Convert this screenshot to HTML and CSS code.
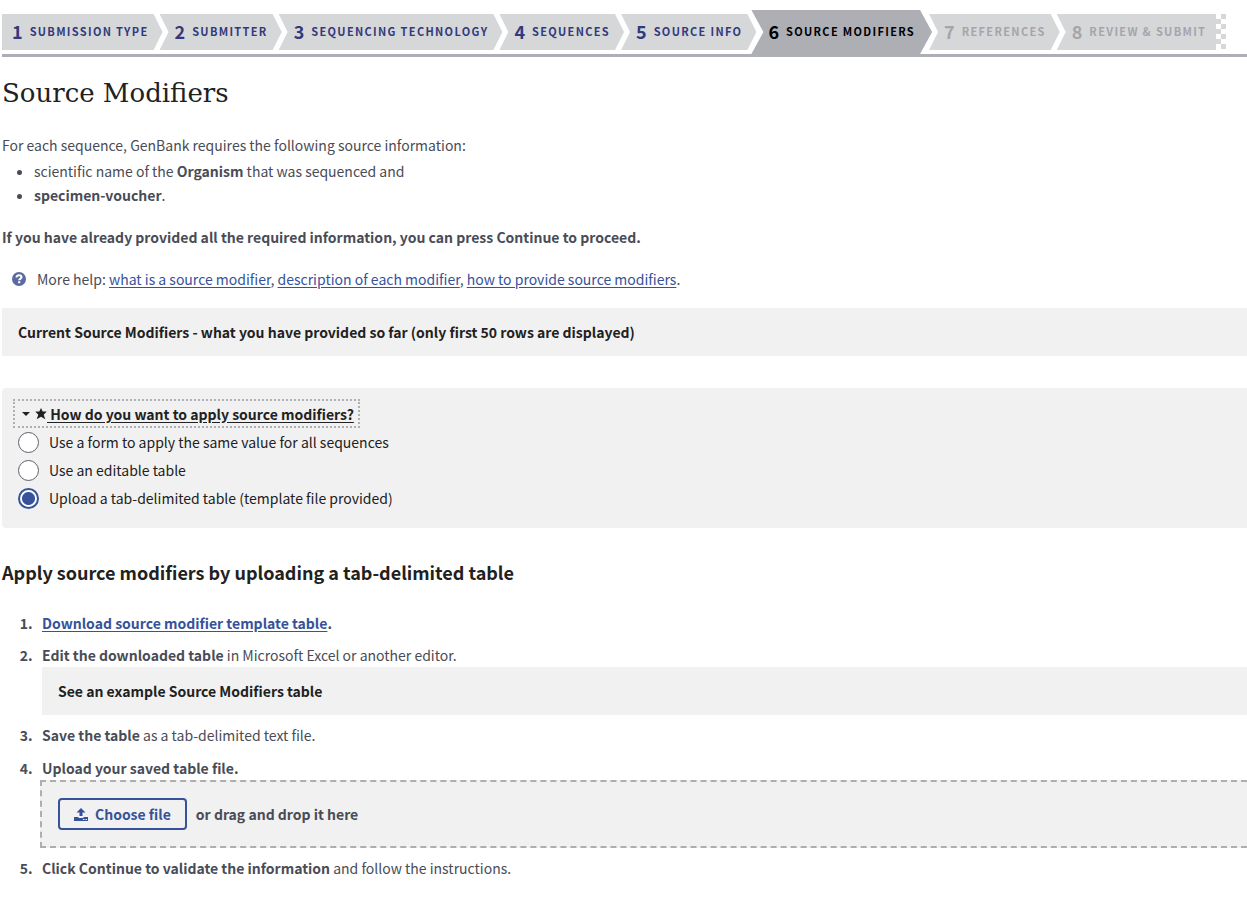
FILE: index.html
```html
<!DOCTYPE html>
<html lang="en">
<head>
<meta charset="utf-8">
<title>Source Modifiers</title>
<link rel="stylesheet" href="styles.css">
</head>
<body>
<nav class="wizard" aria-label="Submission steps">
  <ol class="steps">
    <li class="step first"><a href="#"><span class="num">1</span><span class="name">SUBMISSION TYPE</span></a></li>
    <li class="step"><a href="#"><span class="num">2</span><span class="name">SUBMITTER</span></a></li>
    <li class="step"><a href="#"><span class="num">3</span><span class="name">SEQUENCING TECHNOLOGY</span></a></li>
    <li class="step"><a href="#"><span class="num">4</span><span class="name">SEQUENCES</span></a></li>
    <li class="step"><a href="#"><span class="num">5</span><span class="name">SOURCE INFO</span></a></li>
    <li class="step current" aria-current="step"><span class="num">6</span><span class="name">SOURCE MODIFIERS</span></li>
    <li class="step pending"><span class="num">7</span><span class="name">REFERENCES</span></li>
    <li class="step pending last"><span class="num">8</span><span class="name">REVIEW &amp; SUBMIT</span></li>
  </ol>
  <svg class="finish" width="10" height="36" viewBox="0 0 10 36" aria-hidden="true">
    <path fill="#d6d7d9" d="M5 0h5v5H5zM0 5h5v5H0zM5 10h5v5H5zM0 15h5v5H0zM5 20h5v5H5zM0 25h5v5H0zM5 30h5v5H5z"/>
  </svg>
</nav>

<main>
  <h1>Source Modifiers</h1>
  <p class="intro">For each sequence, GenBank requires the following source information:</p>
  <ul class="required">
    <li>scientific name of the <strong>Organism</strong> that was sequenced and</li>
    <li><strong>specimen-voucher</strong>.</li>
  </ul>
  <p class="note"><strong>If you have already provided all the required information, you can press Continue to proceed.</strong></p>
  <p class="help">
    <svg class="help-icon" width="14" height="14" viewBox="0 0 14 14" aria-hidden="true">
      <circle cx="7" cy="7" r="7" fill="#5b6a9f"/>
      <path d="M4.5 5.500C4.500 3.900 5.700 3.300 7 3.300s2.500.7 2.500 2c0 1.500-2.300 1.500-2.300 2.900" fill="none" stroke="#fff" stroke-width="2"/>
      <path d="M6.100 9.200h2.200v2h-2.200z" fill="#fff"/>
    </svg>
    <span>More help: <a href="#">what is a source modifier</a>, <a href="#">description of each modifier</a>, <a href="#">how to provide source modifiers</a>.</span>
  </p>

  <button type="button" class="disclosure">Current Source Modifiers - what you have provided so far (only first 50 rows are displayed)</button>

  <div class="panel">
    <fieldset class="choices">
      <legend>
        <button type="button" class="toggle" aria-expanded="true">
          <svg width="8" height="4" viewBox="0 0 8 4" aria-hidden="true"><path d="M0 0h8L4 4z" fill="#212121"/></svg>
          <svg class="star" width="12" height="12" viewBox="0 0 12 12" aria-hidden="true"><path d="M6 0l1.700 3.600h4L8.700 6.700l1.600 4.600L6 8.800l-4.300 2.500 1.600-4.600L.3 3.600h4z" fill="#212121"/></svg>
          <span class="question">&nbsp;How do you want to apply source modifiers?</span>
        </button>
      </legend>
      <label class="choice"><input type="radio" name="method">Use a form to apply the same value for all sequences</label>
      <label class="choice"><input type="radio" name="method">Use an editable table</label>
      <label class="choice"><input type="radio" name="method" checked>Upload a tab-delimited table (template file provided)</label>
    </fieldset>
  </div>

  <h2>Apply source modifiers by uploading a tab-delimited table</h2>
  <ol class="tasks">
    <li><strong><a href="#">Download source modifier template table</a>.</strong></li>
    <li><strong>Edit the downloaded table</strong> in Microsoft Excel or another editor.
      <button type="button" class="disclosure">See an example Source Modifiers table</button>
    </li>
    <li><strong>Save the table</strong> as a tab-delimited text file.</li>
    <li class="upload"><strong>Upload your saved table file.</strong>
      <div class="dropzone">
        <button type="button" class="choose">
          <svg width="14" height="13" viewBox="0 0 14 13" aria-hidden="true"><path fill="#36529b" d="M7 0l4.500 4.500H8.500V8h-3V4.500H2.500zM0 9h4.500v1h5V9H14v4H0z"/><path fill="#f1f1f1" d="M9 11h1.500v1H9zM11.500 11H13v1h-1.500z"/></svg>
          Choose file
        </button>
        <strong>or drag and drop it here</strong>
      </div>
    </li>
    <li><strong>Click Continue to validate the information</strong> and follow the instructions.</li>
  </ol>
</main>
</body>
</html>
```
FILE: styles.css
```css
* {
  box-sizing: border-box;
}

@counter-style spaced-decimal {
  system: extends decimal;
  suffix: ".\00a0\00a0\00a0";
}

body {
  margin: 0;
  padding: 10px 0 0 2px;
  background: #fff;
  color: #494c56;
  font-family: "Noto Sans CJK SC", "Noto Sans", sans-serif;
  font-size: 14px;
  line-height: 24px;
}

button {
  font: inherit;
  cursor: pointer;
}

a {
  color: #36529b;
  text-underline-offset: 2px;
}

/* Step bar */
.wizard {
  display: flex;
  align-items: center;
  border-bottom: 3px solid #aeafb5;
}

.steps {
  display: flex;
  align-items: center;
  height: 44px;
  margin: 0;
  padding: 0;
  list-style: none;
}

.step {
  display: flex;
  align-items: center;
  height: 36px;
  margin-left: -3px;
  padding: 0 14px 2px 15px;
  background: #d6d7d9;
  color: #323a7c;
  font-weight: bold;
  white-space: nowrap;
  clip-path: polygon(0 0, calc(100% - 9px) 0, 100% 50%, calc(100% - 9px) 100%, 0 100%, 9px 50%);
}

.step,
.step a {
  gap: 7px;
}

.step a {
  display: flex;
  align-items: center;
  color: inherit;
  text-decoration: none;
}

.num {
  font-size: 18px;
}

.name {
  font-size: 11px;
  letter-spacing: 0.12em;
}

.step.first {
  margin-left: 0;
  padding-left: 10px;
  clip-path: polygon(0 0, calc(100% - 9px) 0, 100% 50%, calc(100% - 9px) 100%, 0 100%);
}

.step.current {
  height: 44px;
  margin-left: -5px;
  padding: 0 17px 2px;
  background: #aeafb5;
  color: #000;
  clip-path: polygon(0 0, calc(100% - 12px) 0, 100% 50%, calc(100% - 12px) 100%, 0 100%, 12px 50%);
}

.step.pending {
  color: #a4a5ab;
}

.step.last {
  padding-right: 10px;
  clip-path: polygon(0 0, 100% 0, 100% 100%, 0 100%, 9px 50%);
}

/* Introduction */
h1 {
  margin: 16px 0 20px;
  color: #212121;
  font-family: "DejaVu Serif", serif;
  font-size: 26px;
  font-weight: normal;
  line-height: 40px;
}

p {
  margin: 0;
}

.required {
  margin: 2px 0 18px;
  padding-left: 32px;
}

.note {
  margin-bottom: 18px;
}

.help {
  display: flex;
  align-items: center;
  gap: 11px;
  margin-bottom: 17px;
  padding-left: 10px;
}

.disclosure {
  display: block;
  width: 100%;
  padding: 12px 16px;
  border: 0;
  background: #f1f1f1;
  color: #212121;
  font-weight: bold;
  text-align: left;
}

/* Method choice */
.panel {
  margin-top: 32px;
  padding: 11px 11px 16px;
  border-radius: 4px 0 0 4px;
  background: #f1f1f1;
  color: #212121;
}

.choices {
  margin: 0;
  padding: 0;
  border: 0;
}

.choices legend {
  padding: 0;
}

.toggle {
  display: flex;
  align-items: center;
  height: 29px;
  padding: 0 4px 0 7px;
  border: 2px dotted #aeafb5;
  background: none;
  color: #212121;
  font-weight: bold;
}

.star {
  margin-left: 5px;
}

.question {
  text-decoration: underline;
  text-underline-offset: 2px;
}

.choice {
  display: flex;
  align-items: center;
  gap: 10px;
  height: 28px;
  padding-left: 5px;
}

.choice input {
  flex: none;
  appearance: none;
  width: 21px;
  height: 21px;
  margin: 0;
  border: 1px solid #5b616b;
  border-radius: 50%;
  background: #fff;
}

.choice input:checked {
  border: 2px solid #36529b;
  background: radial-gradient(circle, #36529b 6px, #fff 7px);
}

/* Upload tasks */
h2 {
  margin: 31px 0 26px;
  color: #212121;
  font-size: 18px;
  line-height: 26px;
}

.tasks {
  display: flex;
  flex-direction: column;
  gap: 8px;
  margin: 0;
  padding-left: 40px;
  list-style: spaced-decimal;
}

.tasks li::marker {
  font-weight: bold;
}

.upload {
  padding-top: 1px;
}

.dropzone {
  display: flex;
  align-items: center;
  gap: 9px;
  height: 68px;
  margin-left: -2px;
  padding: 0 16px;
  border: 2px dashed #aeaeae;
  border-right: 0;
  background: #f1f1f1;
}

.choose {
  display: flex;
  align-items: center;
  gap: 7px;
  height: 32px;
  padding: 0 14px;
  border: 2px solid #36529b;
  border-radius: 4px;
  background: none;
  color: #36529b;
  font-weight: bold;
}
```
